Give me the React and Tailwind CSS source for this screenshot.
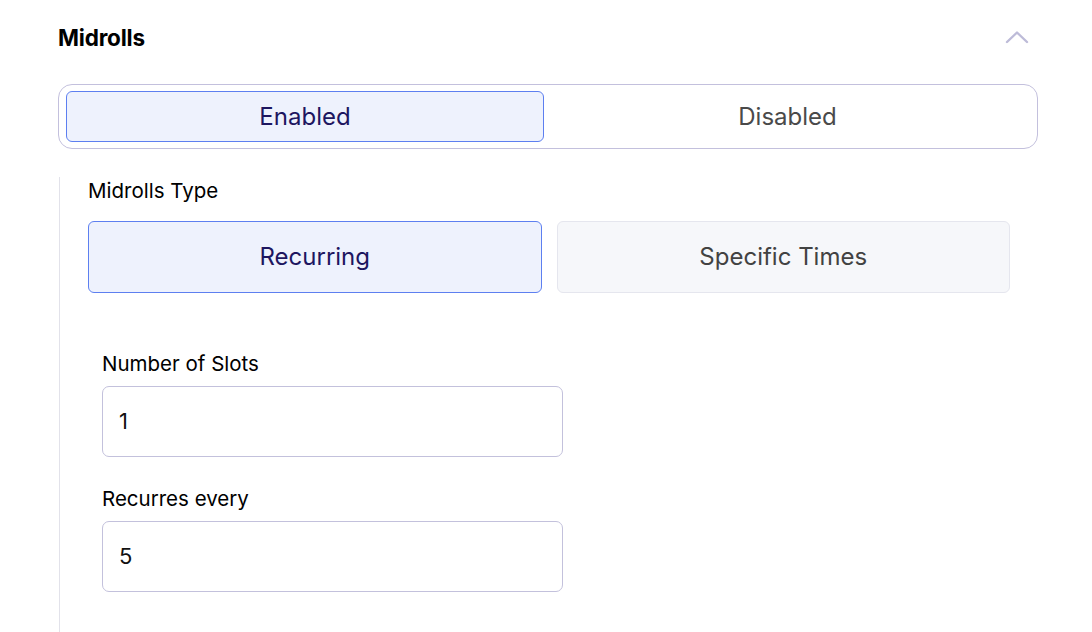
import React from 'react';

const Chevron = () => (
  <svg width="24" height="14" viewBox="0 0 24 14" fill="none">
    <path d="M2 12L12 2.5L22 12" stroke="#bdbbd8" strokeWidth="2.4" strokeLinecap="round" strokeLinejoin="round" />
  </svg>
);

const Field = ({ label, value }) => (
  <div className="flex flex-col">
    <label className="text-[20.5px] leading-6 text-black mb-[10px]">{label}</label>
    <div className="w-[461px] h-[71px] border border-[#c3c1dc] rounded-[7px] flex items-center px-4 text-[22px] text-[#111]">
      {value}
    </div>
  </div>
);

export default function App() {
  return (
    <div className="min-h-screen bg-white pl-[58px] pt-[24px] w-[1038px]" style={{ fontFamily: 'Inter, "Noto Sans", sans-serif' }}>
      <div className="flex items-center justify-between h-[28px]">
        <h2 className="text-[22.5px] font-bold text-black tracking-[-0.2px]">Midrolls</h2>
        <div className="mr-[9px] mt-[-2px]">
          <Chevron />
        </div>
      </div>

      {/* enabled / disabled switch */}
      <div className="mt-[32px] h-[65px] border border-[#c3c0dd] rounded-[14px] pl-[7px] pr-[6px] py-[6px] flex">
        <button className="w-[478px] h-[51px] rounded-[6px] border border-[#5d7ff0] bg-[#eef2fd] text-[24px] text-[#1d1660]">
          Enabled
        </button>
        <button className="flex-1 h-[51px] text-[24px] text-[#4a4a4a]">Disabled</button>
      </div>

      <div className="mt-[28px] ml-px border-l border-[#e2e2ea] pl-[28px] pr-[28px] h-[455px]">
        <div className="pt-[2px] text-[20.5px] leading-6 text-black">Midrolls Type</div>
        <div className="mt-[18px] grid grid-cols-2 gap-[15px]">
          <button className="h-[72px] rounded-[6px] border border-[#5d7ff0] bg-[#eef2fd] text-[24px] text-[#1d1660]">
            Recurring
          </button>
          <button className="h-[72px] rounded-[6px] border border-[#e5e6ee] bg-[#f6f7fa] text-[24px] text-[#424242]">
            Specific Times
          </button>
        </div>

        <div className="pl-[14px] mt-[59px] flex flex-col gap-[30px]">
          <Field label="Number of Slots" value="1" />
          <Field label="Recurres every" value="5" />
        </div>
      </div>
    </div>
  );
}
